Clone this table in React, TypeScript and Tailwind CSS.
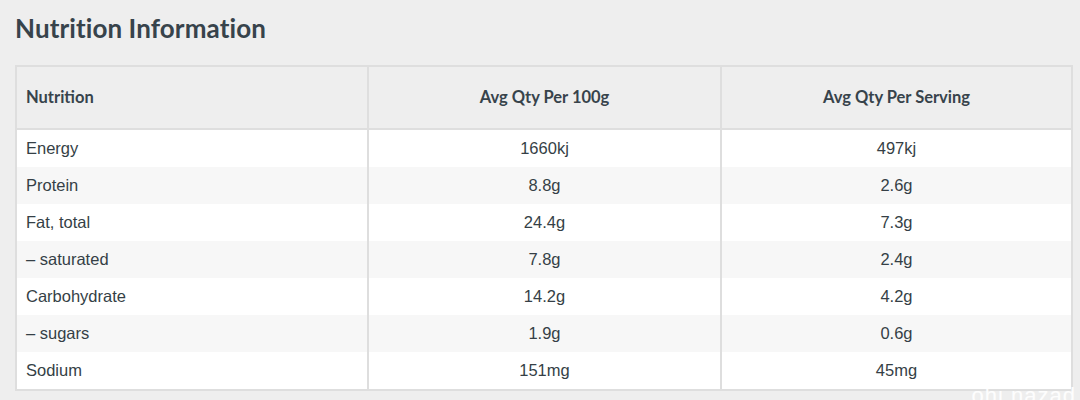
const rows: [string, string, string][] = [
  ["Energy", "1660kj", "497kj"],
  ["Protein", "8.8g", "2.6g"],
  ["Fat, total", "24.4g", "7.3g"],
  ["– saturated", "7.8g", "2.4g"],
  ["Carbohydrate", "14.2g", "4.2g"],
  ["– sugars", "1.9g", "0.6g"],
  ["Sodium", "151mg", "45mg"],
]

export default function App() {
  return (
    <div className="relative h-[400px] w-[1080px] overflow-hidden bg-[#eeeeee] pl-[15px] pr-[7px] text-[#37434b]">
      <h2 className="pt-[11px] font-['Lato',sans-serif] text-[26px] font-bold leading-[34px] tracking-[0.1px] text-[#37434b]">
        Nutrition Information
      </h2>

      {/* table */}
      <div className="mt-[20px] border-2 border-[#dedede]">
        <div className="grid h-[63px] grid-cols-[350px_353px_1fr] border-b-2 border-[#dedede] font-['Lato',sans-serif] text-[16.5px] font-bold">
          <div className="flex items-center pl-[9px]">Nutrition</div>
          <div className="flex items-center justify-center border-l-2 border-[#dedede]">Avg Qty Per 100g</div>
          <div className="flex items-center justify-center border-l-2 border-[#dedede]">Avg Qty Per Serving</div>
        </div>
        {rows.map(([name, per100, serving], i) => (
          <div
            key={name}
            className={`grid h-[37px] grid-cols-[350px_353px_1fr] font-['Liberation_Sans',sans-serif] text-[16.5px] text-[#353f46] ${
              i % 2 === 0 ? "bg-white" : "bg-[#f7f7f7]"
            }`}
          >
            <div className="flex items-center pl-[9px]">{name}</div>
            <div className="flex items-center justify-center border-l-2 border-[#dedede]">{per100}</div>
            <div className="flex items-center justify-center border-l-2 border-[#dedede]">{serving}</div>
          </div>
        ))}
      </div>

      {/* watermark */}
      <div className="absolute right-[4px] top-[385px] font-['Liberation_Sans',sans-serif] text-[22px] leading-none tracking-[1px] text-white/90">
        ohi nazad
      </div>
    </div>
  )
}
